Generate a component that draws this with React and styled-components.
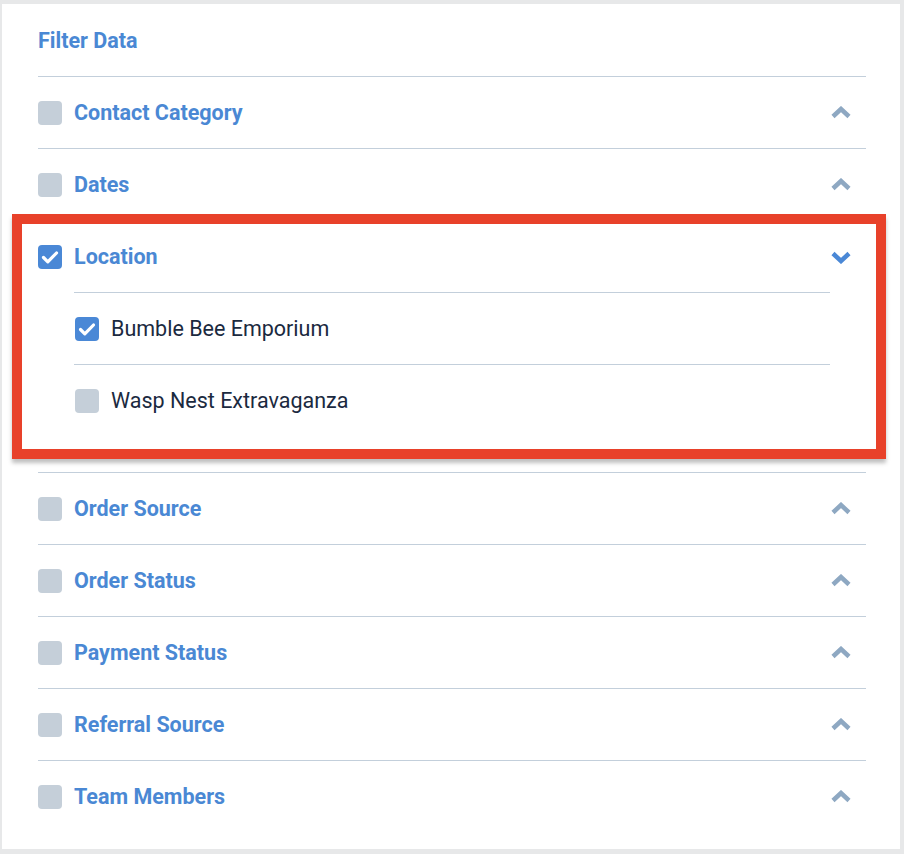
import React from 'react';
import styled, { createGlobalStyle } from 'styled-components';

const GlobalStyle = createGlobalStyle`
  body {
    margin: 0;
    background: #e7e8e9;
    font-family: Roboto, 'Liberation Sans', sans-serif;
  }
`

const filters = [
  { id: 'contact', label: 'Contact Category' },
  { id: 'dates', label: 'Dates' },
  {
    id: 'location',
    label: 'Location',
    checked: true,
    open: true,
    highlight: true,
    options: [
      { id: 'bumble', label: 'Bumble Bee Emporium', checked: true },
      { id: 'wasp', label: 'Wasp Nest Extravaganza' },
    ],
  },
  { id: 'source', label: 'Order Source' },
  { id: 'status', label: 'Order Status' },
  { id: 'payment', label: 'Payment Status' },
  { id: 'referral', label: 'Referral Source' },
  { id: 'team', label: 'Team Members' },
]

export default function App() {
  return (
    <>
      <GlobalStyle />
      <Card>
        <Title>Filter Data</Title>
        {filters.map((f) => (
          <FilterSection key={f.id} filter={f} />
        ))}
      </Card>
    </>
  )
}

function FilterSection({ filter }) {
  return (
    <Section $highlight={filter.highlight}>
      <Row>
        <Checkbox checked={filter.checked} />
        <Label>{filter.label}</Label>
        <Chevron open={filter.open} />
      </Row>
      {filter.open && (
        <Options>
          {filter.options.map((o) => (
            <Option key={o.id}>
              <Checkbox checked={o.checked} />
              <OptionLabel>{o.label}</OptionLabel>
            </Option>
          ))}
        </Options>
      )}
    </Section>
  )
}

function Checkbox({ checked }) {
  return (
    <Box $checked={checked}>
      {checked && (
        <svg width="24" height="24" viewBox="0 0 24 24">
          <polyline
            points="5.5,12.5 9.8,16.8 18.5,8"
            fill="none"
            stroke="#fff"
            strokeWidth="3.2"
            strokeLinecap="round"
            strokeLinejoin="round"
          />
        </svg>
      )}
    </Box>
  )
}

// font-awesome-ish chevron, thick stroke
function Chevron({ open }) {
  return (
    <ChevronIcon width="22" height="14" viewBox="0 0 22 14" $open={open}>
      <polyline
        points={open ? '3,3.5 11,11 19,3.5' : '3,10.5 11,3 19,10.5'}
        fill="none"
        stroke="currentColor"
        strokeWidth="4.5"
      />
    </ChevronIcon>
  )
}

const Card = styled.div`
  background: #fff;
  margin: 4px 4px 0 2px;
  width: 898px;
  min-height: 845px;
  box-sizing: border-box;
  padding: 0 34px 0 36px;
`
const Title = styled.h2`
  margin: 0;
  height: 72px;
  display: flex;
  align-items: center;
  font-size: 21.5px;
  font-weight: 700;
  color: #4a88d4;
  border-bottom: 1px solid #c3cfdb;
`
const Section = styled.div`
  position: relative;
  border-bottom: 1px solid #c3cfdb;
  padding-bottom: ${(p) => (p.$highlight ? '36px' : '0')};

  &:last-child {
    border-bottom: none;
  }

  ${(p) =>
    p.$highlight &&
    `
    &::after {
      content: '';
      position: absolute;
      top: -7px;
      left: -26px;
      right: -20px;
      bottom: 13px;
      border: 10px solid #e8412a;
      box-shadow: 0 4px 4px rgba(0, 0, 0, 0.25);
      pointer-events: none;
    }
  `}
`
const Row = styled.div`
  height: 71px;
  display: flex;
  align-items: center;
  gap: 12px;
`
const Label = styled.span`
  font-size: 21.5px;
  font-weight: 700;
  color: #4a88d4;
  flex: 1;
`
const ChevronIcon = styled.svg`
  margin-right: 14px;
  color: ${(p) => (p.$open ? '#4a88d6' : '#8ea8c2')};
`
const Box = styled.span`
  width: 24px;
  height: 24px;
  border-radius: 4px;
  background: ${(p) => (p.$checked ? '#4a88d6' : '#c5cfd9')};
  display: flex;
  flex-shrink: 0;
`
const Options = styled.div`
  margin: 0 36px 0 36px;
  border-top: 1px solid #c3cfdb;
`
const Option = styled.div`
  height: 71px;
  display: flex;
  align-items: center;
  gap: 12px;
  padding-left: 1px;

  & + & {
    border-top: 1px solid #c3cfdb;
  }
`
const OptionLabel = styled.span`
  font-size: 21.5px;
  color: #1b2a3f;
`
